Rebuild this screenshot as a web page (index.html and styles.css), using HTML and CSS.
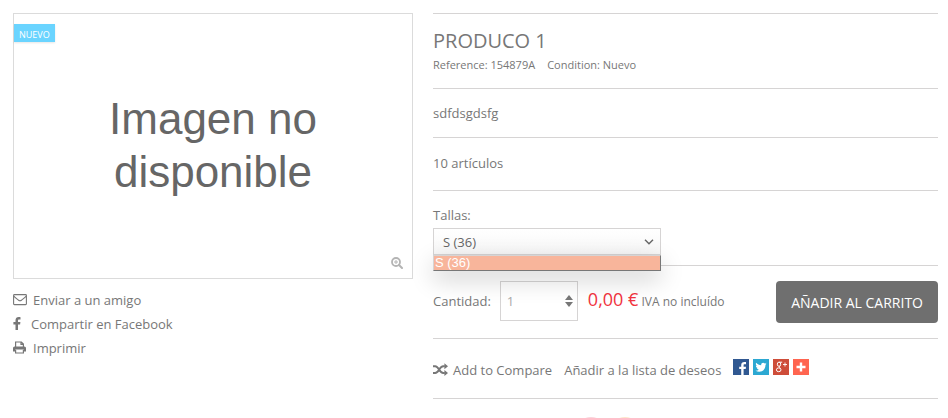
FILE: index.html
```html
<!DOCTYPE html>
<html lang="es">
<head>
    <meta charset="UTF-8">
    <meta name="viewport" content="width=device-width, initial-scale=1.0">
    <title>Produco 1</title>
    <link rel="stylesheet" href="styles.css">
</head>
<body>

    <main class="product">
        <div class="left-column">
            <div class="image-block">
                <span class="new-label">NUEVO</span>
                <p class="no-image">Imagen no<br>disponible</p>
                <button type="button" class="zoom-button" aria-label="Ampliar">
                    <svg width="12" height="12" viewBox="0 0 12 12" fill="none" stroke="#b4b4b4">
                        <circle cx="5" cy="5" r="4" stroke-width="1.8"/>
                        <path d="M3 5h4M5 3v4" stroke-width="1"/>
                        <path d="M8 8l3 3" stroke-width="2" stroke-linecap="round"/>
                    </svg>
                </button>
            </div>

            <ul class="useful-links">
                <li>
                    <a href="#amigo">
                        <svg width="14" height="12" viewBox="0 0 14 12" fill="none" stroke="#777" stroke-width="1.1">
                            <rect x="0.6" y="0.6" width="12.8" height="10" rx="0.8"/>
                            <path d="M0.8 2.2c1.6 1.7 3.2 2.7 4.8 4.1q1.4 1 2.8 0c1.6-1.4 3.2-2.4 4.8-4.1"/>
                        </svg>
                        Enviar a un amigo
                    </a>
                </li>
                <li>
                    <a href="#facebook" class="link-facebook">
                        <svg width="8" height="14" viewBox="0 0 8 14" fill="#777">
                            <path d="M7.5 0.2v2.2H6.2c-1 0-1.2 0.5-1.2 1.2v1.5h2.4l-0.3 2.4H5V13H2.5V7.5H0.4V5.1h2.1V3.3C2.5 1.2 3.8 0 5.7 0c0.9 0 1.6 0.1 1.8 0.2z"/>
                        </svg>
                        Compartir en Facebook
                    </a>
                </li>
                <li>
                    <a href="#imprimir">
                        <svg width="14" height="14" viewBox="0 0 14 14">
                            <path d="M1.6 5.5h9.8q1.6 0 1.6 1.6v3.4h-2.4V8.6H2.4v1.9H0V7.1q0-1.6 1.6-1.6z" fill="#777"/>
                            <path d="M2.6 6.5V1h5.8l2 2v3.5M8 1v2.4h2.4M2.6 9v3h7.8V9" fill="none" stroke="#777" stroke-width="1.2"/>
                        </svg>
                        Imprimir
                    </a>
                </li>
            </ul>
        </div>

        <div class="right-column">
            <section class="block heading">
                <h1>PRODUCO 1</h1>
                <p class="details">
                    <span>Reference: 154879A</span>
                    <span>Condition: Nuevo</span>
                </p>
            </section>

            <section class="block description">
                <p>sdfdsgdsfg</p>
            </section>

            <section class="block stock">
                <p>10 artículos</p>
            </section>

            <form class="buy-form">
                <div class="block attributes">
                    <label for="size">Tallas:</label>
                    <div class="select-wrap">
                        <select id="size" name="size">
                            <option>S (36)</option>
                        </select>
                        <svg class="select-arrow" width="10" height="6" viewBox="0 0 10 6" fill="none" stroke="#666" stroke-width="1.4">
                            <path d="M1 0.8l4 4 4-4"/>
                        </svg>
                        <ul class="select-list">
                            <li>S (36)</li>
                        </ul>
                    </div>
                </div>

                <div class="block buy-row">
                    <label for="quantity">Cantidad:</label>
                    <div class="quantity">
                        <input type="text" id="quantity" name="quantity" value="1">
                        <div class="spinner">
                            <button type="button" aria-label="Más">
                                <svg width="8" height="5" viewBox="0 0 8 5"><path d="M4 0l4 5H0z" fill="#777"/></svg>
                            </button>
                            <button type="button" aria-label="Menos">
                                <svg width="8" height="5" viewBox="0 0 8 5"><path d="M0 0h8L4 5z" fill="#777"/></svg>
                            </button>
                        </div>
                    </div>
                    <p class="price"><strong>0,00 €</strong> IVA no incluído</p>
                    <button type="submit" class="add-button">AÑADIR AL CARRITO</button>
                </div>
            </form>

            <div class="block actions">
                <a href="#compare">
                    <svg width="15" height="14" viewBox="0 0 15 14">
                        <path d="M0 3.2h2.2c3.8 0 4 6.8 8 6.8h1.6M0 10h2.2c3.8 0 4-6.8 8-6.8h1.6" fill="none" stroke="#777" stroke-width="2"/>
                        <path d="M11.4 0.2l3.6 3-3.6 3zM11.4 7l3.6 3-3.6 3z" fill="#777"/>
                    </svg>
                    Add to Compare
                </a>
                <a href="#wishlist">Añadir a la lista de deseos</a>
                <div class="share">
                    <a href="#fb" aria-label="Facebook">
                        <svg width="16" height="16" viewBox="0 0 16 16">
                            <rect width="16" height="16" fill="#305891"/>
                            <path d="M13 3v2.2h-1.4c-0.8 0-1 0.4-1 1v1.5H13l-0.3 2.3h-2.1v6H8.2v-6h-2V7.7h2V5.9C8.2 4 9.4 2.9 11.3 2.9c0.8 0 1.5 0 1.7 0.1z" fill="#fff"/>
                        </svg>
                    </a>
                    <a href="#tw" aria-label="Twitter">
                        <svg width="16" height="16" viewBox="0 0 16 16">
                            <rect width="16" height="16" fill="#2ca8d2"/>
                            <path d="M13.6 4.7l-1.3 0.4 1-1.3-1.5 0.6c-1.6-1.6-4-0.4-3.6 1.8C6.1 6.1 4.5 5.3 3.2 3.8c-0.7 1.2-0.4 2.4 0.7 3.2l-1-0.3c0 1.2 0.7 2 1.9 2.4h-1c0.3 0.9 1.1 1.5 2.1 1.6-1 0.8-2.2 1.1-3.4 1 5 2.9 10.1-0.2 10-5.9z" fill="#fff"/>
                        </svg>
                    </a>
                    <a href="#gp" aria-label="Google+">
                        <svg width="16" height="16" viewBox="0 0 16 16" fill="none" stroke="#fff">
                            <rect width="16" height="16" fill="#ce4d39" stroke="none"/>
                            <ellipse cx="6" cy="5.2" rx="1.7" ry="2.1"/>
                            <path d="M6.2 3.2h3M7.2 7c-1.8 1.2-0.4 1.5 0.3 2.3"/>
                            <ellipse cx="5.7" cy="10.8" rx="2.3" ry="1.9"/>
                            <path d="M10 5.5h4M12 3.5v4" stroke-width="0.9"/>
                        </svg>
                    </a>
                    <a href="#more" aria-label="Más">
                        <svg width="16" height="16" viewBox="0 0 16 16">
                            <rect width="16" height="16" fill="#ff6550"/>
                            <path d="M3.5 8h9M8 3.5v9" stroke="#fff" stroke-width="2.4"/>
                        </svg>
                    </a>
                </div>
            </div>

            <div class="block payments">
                <svg width="60" height="1" viewBox="0 0 60 1">
                    <circle cx="12" cy="16" r="16" fill="#f9d5dc"/>
                    <circle cx="46" cy="16" r="16" fill="#fde6cc"/>
                </svg>
            </div>
        </div>
    </main>

</body>
</html>
```

FILE: styles.css
```css
* {
    box-sizing: border-box;
}

body {
    margin: 0;
    padding: 13px 10px 0 13px;
    background-color: #fff;
    color: #777;
    font-family: 'Open Sans', sans-serif;
    font-size: 13px;
    line-height: 18px;
}

h1, p, ul {
    margin: 0;
    padding: 0;
}

ul {
    list-style: none;
}

a {
    color: #777;
    text-decoration: none;
}

button, input, select {
    font-family: inherit;
    font-size: 13px;
    color: inherit;
}

button {
    border: none;
    padding: 0;
    background: none;
    cursor: pointer;
}

svg {
    display: block;
    flex: none;
}

.product {
    display: grid;
    grid-template-columns: minmax(0, 400fr) minmax(0, 505fr);
    gap: 20px;
}

/* Image */
.image-block {
    position: relative;
    display: flex;
    align-items: center;
    justify-content: center;
    aspect-ratio: 400 / 266;
    padding-bottom: 2px;
    border: 1px solid #dbdbdb;
}

.new-label {
    position: absolute;
    top: 10px;
    left: 0;
    padding: 2px 5px 0;
    height: 18px;
    background-color: #6ad4ff;
    box-shadow: 0 1px 2px rgba(0, 0, 0, 0.1);
    color: #fff;
    font-size: 9px;
}

.no-image {
    color: #666;
    font-family: 'Liberation Sans', Arial, sans-serif;
    font-size: 44px;
    line-height: 53px;
    text-align: center;
}

.zoom-button {
    position: absolute;
    right: 9px;
    bottom: 9px;
}

.useful-links {
    padding-top: 9px;
}

.useful-links li {
    padding: 3px 0;
}

.useful-links a {
    display: flex;
    align-items: center;
    gap: 6px;
}

.useful-links .link-facebook {
    gap: 10px;
}

/* Product info */
.block {
    border-top: 1px solid #d6d4d4;
}

.heading {
    padding: 15px 0 14px;
}

h1 {
    font-size: 20px;
    font-weight: normal;
    line-height: 24px;
}

.details {
    display: flex;
    gap: 12px;
    padding-top: 3px;
    font-size: 11px;
}

.description {
    padding: 15px 0;
}

.stock {
    padding: 16px 0 18px;
}

.attributes {
    padding: 15px 0 10px;
}

.attributes label {
    display: block;
    padding-bottom: 4px;
}

.select-wrap {
    position: relative;
    width: 228px;
    max-width: 100%;
    z-index: 1;
}

select {
    display: block;
    width: 100%;
    height: 27px;
    padding: 0 9px;
    appearance: none;
    border: 1px solid #d6d4d4;
    border-radius: 0;
    background: linear-gradient(#fff, #f7f7f7);
    color: #666;
}

.select-arrow {
    position: absolute;
    top: 11px;
    right: 7px;
    pointer-events: none;
}

.select-list {
    position: absolute;
    top: 100%;
    left: 0;
    width: 100%;
    border: 1px solid #777;
    border-top-color: #d6d4d4;
    border-left-color: #d6d4d4;
    background-color: #f8b59b;
    box-shadow: 0 8px 24px rgba(0, 0, 0, 0.2);
    color: #fff;
    font-family: 'Liberation Sans', Arial, sans-serif;
    font-size: 13px;
    line-height: 14px;
}

.select-list li {
    padding-left: 1px;
}

.buy-row {
    display: flex;
    align-items: center;
    padding: 15px 0;
}

.quantity {
    position: relative;
    width: 78px;
    margin: 0 10px 2px 9px;
}

.quantity input {
    display: block;
    width: 100%;
    height: 40px;
    padding: 0 22px 0 6px;
    border: 1px solid #d6d4d4;
    background-color: transparent;
    color: #aaa;
}

.spinner {
    position: absolute;
    top: 14px;
    right: 5px;
    display: flex;
    flex-direction: column;
    gap: 2px;
}

.price {
    padding-bottom: 4px;
    font-size: 12px;
    white-space: nowrap;
}

.price strong {
    color: #f13340;
    font-size: 18px;
    font-weight: normal;
}

.buy-row label {
    padding-bottom: 2px;
}

.add-button {
    height: 42px;
    margin-left: auto;
    padding: 0 15px;
    border-radius: 4px;
    background-color: #6f6f6f;
    color: #fff;
    font-size: 14px;
    white-space: nowrap;
}

.actions {
    display: flex;
    align-items: center;
    gap: 12px;
    height: 60px;
    padding-top: 3px;
}

.actions a {
    display: flex;
    align-items: center;
    gap: 5px;
}

.share {
    display: flex;
    gap: 4px;
    padding-bottom: 6px;
}

.payments {
    display: flex;
    justify-content: center;
    padding: 18px 154px 0 0;
}
```
